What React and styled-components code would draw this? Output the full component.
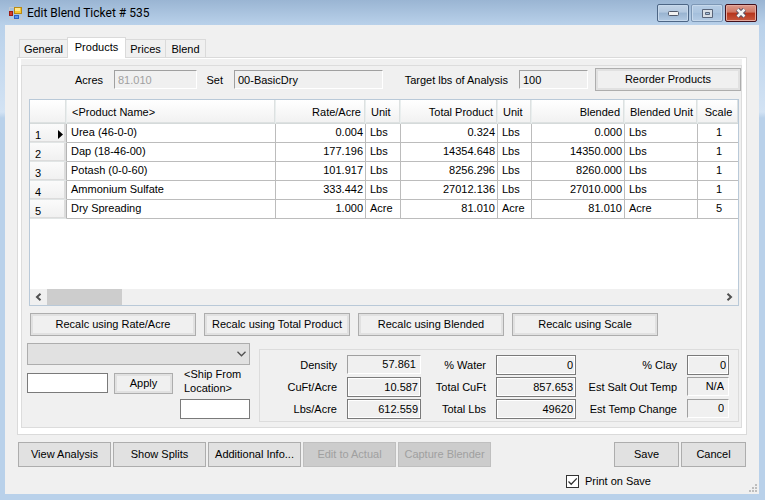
import React, { useState } from 'react';
import styled, { createGlobalStyle } from 'styled-components';

const GlobalStyle = createGlobalStyle`
  * {
    box-sizing: border-box;
  }

  body {
    margin: 0;
    font: 11px/14px "Liberation Sans", Arial, sans-serif;
    color: #000;
  }

  button, input, select {
    font: inherit;
    color: inherit;
    margin: 0;
    border-radius: 0;
  }
`;

const Window = styled.div`
  display: flex;
  flex-direction: column;
  min-height: 100vh;
  padding: 0 6px 6px 5px;
  background: linear-gradient(#9ab5d3 0, #b9d1ea 25px, #d3e3f4 112px, #b9d1ea 118px);
`;

const TitleBar = styled.header`
  display: flex;
  align-items: center;
  gap: 5px;
  height: 25px;
  padding: 1px 2px 0 4px;

  h1 {
    flex: 1;
    margin: 0;
    font: 12px/16px Roboto, "Open Sans", sans-serif;
  }
`;

const WindowButtons = styled.div`
  display: flex;
  gap: 2px;
`;

const WindowButton = styled.button`
  display: flex;
  align-items: center;
  justify-content: center;
  width: 32px;
  height: 18px;
  padding: 0;
  border: 1px solid ${(p) => (p.$close ? '#43101b' : p.$faded ? '#7d97b5' : '#4d6685')};
  border-radius: 2px;
  box-shadow: inset 0 0 0 1px ${(p) => (p.$close ? '#e5a99d' : '#c7d9ec')};
  background: ${(p) => (p.$close
    ? 'linear-gradient(#dd9a8c 0, #cf7764 45%, #b5341c 50%, #c8593f 100%)'
    : p.$faded
      ? 'linear-gradient(#b7cde5 0, #abc4df 50%, #a3bedb 50%, #b5cce5 100%)'
      : 'linear-gradient(#c3d4e7 0, #b3c8df 45%, #98b3d0 50%, #b2c9e2 100%)')};
`;

const Client = styled.main`
  display: flex;
  flex: 1;
  flex-direction: column;
  padding: 12px 12px 0;
  background: #f0f0f0;
`;

const Tabs = styled.div`
  display: flex;
  align-items: flex-end;
  height: 20px;
  padding-left: 2px;
`;

const Tab = styled.button`
  height: ${(p) => (p.$active ? 21 : 18)}px;
  width: ${(p) => p.$width}px;
  padding: 0 0 ${(p) => (p.$active ? 2 : 0)}px;
  border: 1px solid #dadada;
  border-bottom: 0;
  border-left-width: ${(p) => (p.$first || p.$active ? 1 : 0)}px;
  margin-right: ${(p) => (p.$beforeActive ? -1 : 0)}px;
  margin-bottom: ${(p) => (p.$active ? -1 : 0)}px;
  background: ${(p) => (p.$active ? '#fff' : '#f0f0f0')};
  z-index: ${(p) => (p.$active ? 1 : 0)};
  white-space: nowrap;
`;

const TabPage = styled.div`
  display: flex;
  flex: 1;
  padding: 1px 4px 6px 3px;
  border: 1px solid #dadada;
  background: #fff;
`;

const PageFill = styled.div`
  display: flex;
  flex: 1;
  min-width: 0;
  padding-top: 6px;
  background: #f0f0f0;
`;

const Group = styled.section`
  display: flex;
  flex: 1;
  flex-direction: column;
  min-width: 0;
  padding: 2px 0 5px;
  border: 1px solid #dcdcdc;
`;

const FieldBar = styled.div`
  display: grid;
  grid-template-columns: 92px 83px 37px 1fr 136px 69px 153px;
  align-items: center;

  label {
    padding-right: 11px;
    text-align: right;
    white-space: nowrap;
  }

  button {
    justify-self: end;
  }
`;

const SunkenInput = styled.input`
  width: 100%;
  min-width: 0;
  height: 19px;
  padding: ${(p) => (p.$right ? '0 4px 2px' : '0 3px')};
  border: 1px solid;
  border-color: #a0a0a0 #fff #fff #a0a0a0;
  outline: 0;
  background: #f0f0f0;
  text-align: ${(p) => (p.$right ? 'right' : 'left')};

  &:disabled {
    color: #a0a0a0;
  }
`;

const BoxInput = styled.input`
  width: ${(p) => (p.$width ? `${p.$width}px` : '100%')};
  min-width: 0;
  height: 20px;
  padding: 0 2px;
  border: 1px solid #7a7a7a;
  box-shadow: inset 0 0 0 1px #fff;
  outline: 0;
  background: ${(p) => (p.readOnly ? '#f0f0f0' : '#fff')};
  text-align: ${(p) => (p.readOnly ? 'right' : 'left')};
`;

const FramedButton = styled.button`
  width: ${(p) => p.$width}px;
  height: ${(p) => p.$height || 23}px;
  padding: 0 0 1px;
  border: 1px solid #adadad;
  box-shadow: inset 0 0 0 2px #e1e1e1;
  background: #f0f0f0;
  white-space: nowrap;
`;

const FlatButton = styled.button`
  width: ${(p) => p.$width || 93}px;
  height: 25px;
  padding: 0 0 1px;
  border: 1px solid #adadad;
  background: #e1e1e1;
  white-space: nowrap;

  &:disabled {
    border-color: #bfbfbf;
    background: #ccc;
    color: #a0a0a0;
  }
`;

const GridBox = styled.div`
  display: flex;
  flex: 1;
  flex-direction: column;
  margin: 8px 2px 7px 7px;
  border: 1px solid #b9c9d8;
  background: #fff;
`;

const Table = styled.table`
  width: 100%;
  table-layout: fixed;
  border-collapse: separate;
  border-spacing: 0;
`;

const HeadCell = styled.th`
  width: ${(p) => (p.$width ? `${p.$width}px` : 'auto')};
  height: 24px;
  padding: 1px 4px 0 5px;
  border-right: 1px solid #e9eeee;
  border-bottom: 1px solid #d5dada;
  box-shadow: inset -1px -1px 0 #dde1e1;
  background: linear-gradient(#fff, #f1f1f1);
  font-weight: normal;
  text-align: ${(p) => p.$align || 'left'};
  white-space: nowrap;

  &:last-child {
    border-right: 0;
  }
`;

const RowHead = styled.th`
  height: 19px;
  padding: 3px 3px 0 5px;
  border-right: 1px solid #b4b4b4;
  border-bottom: 1px solid #e1e5e5;
  box-shadow: inset -2px -1px 0 #dcdcdc;
  background: linear-gradient(#fbfbfb, #f0f0f0);
  font-weight: normal;

  div {
    display: flex;
    align-items: center;
    justify-content: space-between;
  }
`;

const Cell = styled.td`
  height: 19px;
  padding: 0 2px 2px 4px;
  border-right: 1px solid #bcbcbc;
  border-bottom: 1px solid #bcbcbc;
  text-align: ${(p) => p.$align || 'left'};
  white-space: nowrap;

  &:last-child {
    border-right: 0;
  }
`;

const ScrollBar = styled.div`
  display: flex;
  justify-content: space-between;
  height: 16px;
  margin-top: auto;
  background: #f0f0f0;
`;

const ScrollButton = styled.button`
  width: 17px;
  padding: 0;
  border: 0;
  background: none;

  svg {
    display: block;
    margin: 0 auto;
  }
`;

const Thumb = styled.div`
  width: 75px;
  margin-right: auto;
  background: #cdcdcd;
`;

const RecalcBar = styled.div`
  display: flex;
  gap: 8px;
  padding-left: 8px;
`;

const Lower = styled.div`
  display: flex;
  gap: 9px;
  padding: 7px 2px 0 5px;
`;

const Shipping = styled.div`
  width: 223px;
`;

const SelectWrap = styled.div`
  display: grid;

  select, svg {
    grid-area: 1 / 1;
  }

  select {
    appearance: none;
    height: 22px;
    border: 1px solid #adadad;
    background: #e1e1e1;
  }

  svg {
    place-self: center end;
    margin-right: 4px;
    pointer-events: none;
  }
`;

const ShippingRow = styled.div`
  display: flex;
  align-items: flex-start;
  gap: 6px;
  padding-top: 8px;
`;

const ShipFrom = styled.div`
  display: flex;
  flex: 1;
  flex-direction: column;
  align-items: flex-end;
  gap: 4px;
  margin-top: -6px;

  label {
    width: 66px;
  }
`;

const Stats = styled.div`
  display: grid;
  flex: 1;
  grid-template-columns: 1fr 74px 55px 80px 91px 42px;
  grid-auto-rows: 20px;
  gap: 2px 10px;
  margin-top: 6px;
  padding: 5px 9px 2px 0;
  border: 1px solid #dcdcdc;

  label {
    align-self: center;
    text-align: right;
    white-space: nowrap;
  }
`;

const Footer = styled.footer`
  display: flex;
  gap: 2px;
  padding: 7px 1px 0;
`;

const Spacer = styled.div`
  flex: 1;
`;

const PrintRow = styled.div`
  display: flex;
  justify-content: flex-end;
  align-items: center;
  height: 27px;
  margin-right: -10px;

  label {
    display: flex;
    align-items: center;
    gap: 6px;
    padding-top: 1px;
    margin-right: 98px;
  }

  > svg {
    align-self: flex-end;
    margin-bottom: 2px;
  }
`;

const CheckBox = styled.span`
  display: grid;

  input, svg {
    grid-area: 1 / 1;
  }

  input {
    appearance: none;
    width: 13px;
    height: 13px;
    border: 1px solid #333;
    background: #fff;
  }

  svg {
    pointer-events: none;
  }

  input:not(:checked) + svg {
    visibility: hidden;
  }
`;

const columns = [
  { title: '<Product Name>' },
  { title: 'Rate/Acre', width: 90, align: 'right' },
  { title: 'Unit', width: 35 },
  { title: 'Total Product', width: 97, align: 'right' },
  { title: 'Unit', width: 34 },
  { title: 'Blended', width: 93, align: 'right' },
  { title: 'Blended Unit', width: 73 },
  { title: 'Scale', width: 40, align: 'center' },
];

const products = [
  ['Urea (46-0-0)', '0.004', 'Lbs', '0.324', 'Lbs', '0.000', 'Lbs', '1'],
  ['Dap (18-46-00)', '177.196', 'Lbs', '14354.648', 'Lbs', '14350.000', 'Lbs', '1'],
  ['Potash (0-0-60)', '101.917', 'Lbs', '8256.296', 'Lbs', '8260.000', 'Lbs', '1'],
  ['Ammonium Sulfate', '333.442', 'Lbs', '27012.136', 'Lbs', '27010.000', 'Lbs', '1'],
  ['Dry Spreading', '1.000', 'Acre', '81.010', 'Acre', '81.010', 'Acre', '5'],
];

const stats = [
  { label: 'Density', value: '57.861', sunken: true },
  { label: '% Water', value: '0' },
  { label: '% Clay', value: '0' },
  { label: 'CuFt/Acre', value: '10.587' },
  { label: 'Total CuFt', value: '857.653' },
  { label: 'Est Salt Out Temp', value: 'N/A', sunken: true },
  { label: 'Lbs/Acre', value: '612.559' },
  { label: 'Total Lbs', value: '49620' },
  { label: 'Est Temp Change', value: '0', sunken: true },
];

const tabs = [
  { name: 'General', width: 49 },
  { name: 'Products', width: 59 },
  { name: 'Prices', width: 40 },
  { name: 'Blend', width: 40 },
];

const AppIcon = () => (
  <svg width="13" height="13" viewBox="0 0 13 13">
    <path d="M0.5 3.5v-3h5M0.5 10v2.5h12v-5" fill="none" stroke="#c4c9cd" />
    <rect x="5.5" y="0.5" width="7" height="6" fill="#f7c62f" stroke="#b98a12" />
    <rect x="6" y="1" width="5" height="3" fill="#ffe68a" />
    <rect x="0.5" y="4.5" width="3" height="4" fill="#d63c2a" stroke="#9c1c14" />
    <rect x="5.5" y="8.5" width="4" height="3" fill="#5c93ea" stroke="#2d62c4" />
  </svg>
);

const ProductGrid = () => (
  <GridBox>
    <Table>
      <thead>
        <tr>
          <HeadCell $width={37} />
          {columns.map((col, i) => (
            <HeadCell key={i} $width={col.width} $align={col.align}>{col.title}</HeadCell>
          ))}
        </tr>
      </thead>
      <tbody>
        {products.map((row, i) => (
          <tr key={row[0]}>
            <RowHead scope='row'>
              <div>
                {i + 1}
                {i === 0 ? (
                  <svg width="5" height="9" viewBox="0 0 5 9"><path d="M0 0L5 4.5L0 9z" /></svg>
                ) : null}
              </div>
            </RowHead>
            {row.map((value, c) => (
              <Cell key={c} $align={columns[c].align}>{value}</Cell>
            ))}
          </tr>
        ))}
      </tbody>
    </Table>
    <ScrollBar>
      <ScrollButton aria-label='Scroll left'>
        <svg width="7" height="8" viewBox="0 0 7 8"><path d="M5.5 0.8L2 4L5.5 7.2" fill="none" stroke="#505050" strokeWidth="2" /></svg>
      </ScrollButton>
      <Thumb />
      <ScrollButton aria-label='Scroll right'>
        <svg width="7" height="8" viewBox="0 0 7 8"><path d="M1.5 0.8L5 4L1.5 7.2" fill="none" stroke="#505050" strokeWidth="2" /></svg>
      </ScrollButton>
    </ScrollBar>
  </GridBox>
);

const App = () => {
  const [active, setActive] = useState('Products');
  const [print, setPrint] = useState(true);

  return (
    <Window>
      <GlobalStyle />
      <TitleBar>
        <AppIcon />
        <h1>Edit Blend Ticket # 535</h1>
        <WindowButtons>
          <WindowButton aria-label='Minimize'>
            <svg width="11" height="6" viewBox="0 0 11 6"><rect x="0.5" y="1.5" width="10" height="4" rx="1" fill="#f2f2f2" stroke="#50586a" /></svg>
          </WindowButton>
          <WindowButton $faded aria-label='Maximize'>
            <svg width="11" height="9" viewBox="0 0 11 9">
              <path d="M0.5 0.5h10v8h-10zM3.5 3.5h4v2h-4z" fill="#d9dfe6" fillRule="evenodd" stroke="#59657a" />
            </svg>
          </WindowButton>
          <WindowButton $close aria-label='Close'>
            <svg width="12" height="10" viewBox="0 0 12 10">
              <path d="M2.5 1.5L9.5 8.5M9.5 1.5L2.5 8.5" stroke="#565064" strokeWidth="4.5" />
              <path d="M2.5 1.5L9.5 8.5M9.5 1.5L2.5 8.5" stroke="#f4f4f4" strokeWidth="2.5" />
            </svg>
          </WindowButton>
        </WindowButtons>
      </TitleBar>
      <Client>
        <Tabs role='tablist'>
          {tabs.map((tab, i) => (
            <Tab
              key={tab.name}
              role='tab'
              aria-selected={active === tab.name}
              $first={i === 0}
              $active={active === tab.name}
              $beforeActive={tabs[i + 1] && tabs[i + 1].name === active}
              $width={tab.width}
              onClick={() => setActive(tab.name)}>
              {tab.name}
            </Tab>
          ))}
        </Tabs>
        <TabPage>
          <PageFill>
            <Group>
              <FieldBar>
                <label htmlFor='acres'>Acres</label>
                <SunkenInput id='acres' defaultValue='81.010' disabled />
                <label htmlFor='set'>Set</label>
                <SunkenInput id='set' defaultValue='00-BasicDry' readOnly />
                <label htmlFor='target'>Target lbs of Analysis</label>
                <SunkenInput id='target' defaultValue='100' readOnly />
                <FramedButton $width={146}>Reorder Products</FramedButton>
              </FieldBar>
              <ProductGrid />
              <RecalcBar>
                <FramedButton $width={166}>Recalc using Rate/Acre</FramedButton>
                <FramedButton $width={146}>Recalc using Total Product</FramedButton>
                <FramedButton $width={146}>Recalc using Blended</FramedButton>
                <FramedButton $width={146}>Recalc using Scale</FramedButton>
              </RecalcBar>
              <Lower>
                <Shipping>
                  <SelectWrap>
                    <select aria-label='Location' />
                    <svg width="9" height="6" viewBox="0 0 9 6"><path d="M0.5 0.8L4.5 4.8L8.5 0.8" fill="none" stroke="#505050" strokeWidth="1.3" /></svg>
                  </SelectWrap>
                  <ShippingRow>
                    <BoxInput $width={81} aria-label='Amount' />
                    <FramedButton $width={59} $height={21}>Apply</FramedButton>
                    <ShipFrom>
                      <label htmlFor='ship'>&lt;Ship From Location&gt;</label>
                      <BoxInput id='ship' $width={70} />
                    </ShipFrom>
                  </ShippingRow>
                </Shipping>
                <Stats>
                  {stats.map((s, i) => {
                    const Input = s.sunken ? SunkenInput : BoxInput;
                    return (
                      <React.Fragment key={s.label}>
                        <label htmlFor={`stat${i}`}>{s.label}</label>
                        <Input id={`stat${i}`} $right={s.sunken} defaultValue={s.value} readOnly />
                      </React.Fragment>
                    );
                  })}
                </Stats>
              </Lower>
            </Group>
          </PageFill>
        </TabPage>
        <Footer>
          <FlatButton>View Analysis</FlatButton>
          <FlatButton>Show Splits</FlatButton>
          <FlatButton>Additional Info...</FlatButton>
          <FlatButton disabled>Edit to Actual</FlatButton>
          <FlatButton disabled>Capture Blender</FlatButton>
          <Spacer />
          <FlatButton $width={65}>Save</FlatButton>
          <FlatButton $width={65}>Cancel</FlatButton>
        </Footer>
        <PrintRow>
          <label>
            <CheckBox>
              <input type='checkbox' checked={print} onChange={(e) => setPrint(e.target.checked)} />
              <svg width="13" height="13" viewBox="0 0 13 13"><path d="M2.5 6.5L5.2 9.2L10.8 3.4" fill="none" stroke="#333" strokeWidth="1.3" /></svg>
            </CheckBox>
            Print on Save
          </label>
          <svg width="8" height="8" viewBox="0 0 8 8" fill="#bdbdbd">
            <path d="M6 0h2v2h-2zM3 3h2v2h-2zM6 3h2v2h-2zM0 6h2v2h-2zM3 6h2v2h-2zM6 6h2v2h-2z" />
          </svg>
        </PrintRow>
      </Client>
    </Window>
  );
}

export default App;
